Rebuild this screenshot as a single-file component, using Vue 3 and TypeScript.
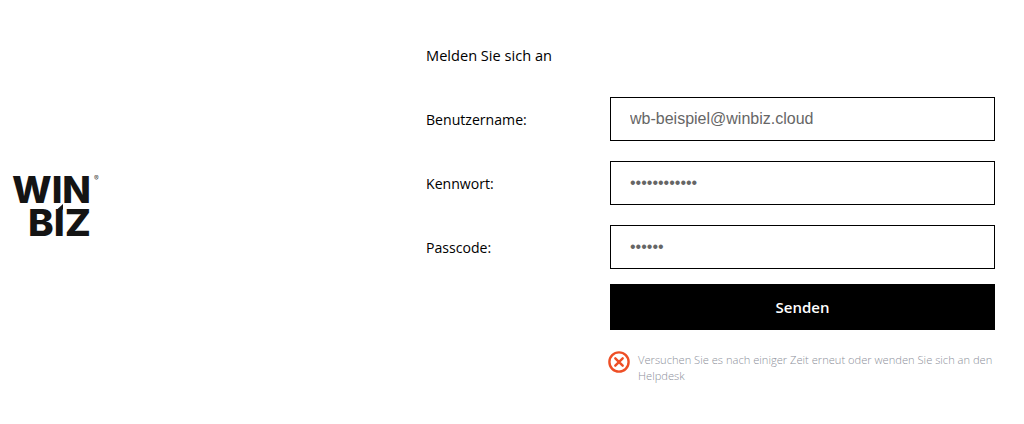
<script setup lang="ts">
import { ref } from "vue";

const username = ref("wb-beispiel@winbiz.cloud");
const password = ref("............");
const passcode = ref("......");
</script>

<template>
  <main class="page">
    <div class="logoCol">
      <svg class="logo" width="94" height="72" viewBox="0 0 94 72">
        <text x="2" y="32.5" textLength="79" lengthAdjust="spacingAndGlyphs">WIN</text>
        <text x="18" y="66" textLength="63" lengthAdjust="spacingAndGlyphs">BIZ</text>
        <polygon points="47,39.5 53,39.5 53,34" fill="#141414" />
        <text class="reg" x="84" y="10.5">®</text>
      </svg>
    </div>

    <form class="formCol" @submit.prevent>
      <h1 class="title">Melden Sie sich an</h1>

      <label class="row">
        <span class="label">Benutzername:</span>
        <input v-model="username" class="field" type="text" />
      </label>
      <label class="row">
        <span class="label">Kennwort:</span>
        <input v-model="password" class="field" type="password" />
      </label>
      <label class="row">
        <span class="label">Passcode:</span>
        <input v-model="passcode" class="field" type="password" />
      </label>

      <div class="actions">
        <button class="submit" type="submit">Senden</button>
        <div class="error">
          <svg class="errorIcon" width="22" height="22" viewBox="0 0 22 22" fill="none" stroke="#ee4f26">
            <circle cx="11" cy="11" r="9.6" stroke-width="2.4" />
            <path d="M7.3 7.3l7.4 7.4M14.7 7.3l-7.4 7.4" stroke-width="2.4" stroke-linecap="round" />
          </svg>
          <p class="errorText">
            Versuchen Sie es nach einiger Zeit erneut oder wenden Sie sich an den Helpdesk
          </p>
        </div>
      </div>
    </form>
  </main>
</template>

<style>
html,
body {
  background: #fff;
}
</style>

<style scoped>
.page {
  display: flex;
  align-items: flex-start;
  height: 424px;
  box-sizing: border-box;
  overflow: hidden;
  font-family: "Open Sans", "Noto Sans", sans-serif;
  color: #000;
}

.logoCol {
  width: 426px;
  flex: none;
  padding: 170px 0 0 10px;
  box-sizing: border-box;
}

.logo {
  display: block;
  overflow: visible;
  font-family: Inter, sans-serif;
  font-weight: 800;
  font-size: 37px;
  fill: #141414;
}

.reg {
  font-size: 7px;
  font-weight: 400;
  fill: #444;
}

.formCol {
  width: 569px;
  flex: none;
  padding-top: 45px;
}

.title {
  margin: 0 0 31px;
  font-size: 14.6px;
  line-height: 21px;
  font-weight: 500;
}

.row {
  display: flex;
  align-items: center;
  height: 44px;
  margin-bottom: 20px;
}

.label {
  width: 184px;
  flex: none;
  font-size: 14.1px;
  font-weight: 500;
}

.field {
  width: 385px;
  height: 44px;
  box-sizing: border-box;
  padding: 0 19px;
  border: 1px solid #000;
  border-radius: 0;
  outline: none;
  background: #fff;
  color: #666;
  font-family: "Liberation Sans", Arial, sans-serif;
  font-size: 16px;
}

.actions {
  margin-left: 184px;
  margin-top: -5px;
}

.submit {
  display: block;
  width: 385px;
  height: 46px;
  border: 0;
  background: #000;
  color: #fff;
  font-family: inherit;
  font-size: 15px;
  font-weight: 600;
}

.error {
  display: flex;
  align-items: flex-start;
  gap: 8px;
  margin-top: 21px;
  margin-left: -2px;
}

.errorIcon {
  flex: none;
}

.errorText {
  margin: 1px 0 0;
  width: 360px;
  font-size: 11.15px;
  line-height: 16px;
  font-weight: 300;
  color: #8d8f9a;
}
</style>
